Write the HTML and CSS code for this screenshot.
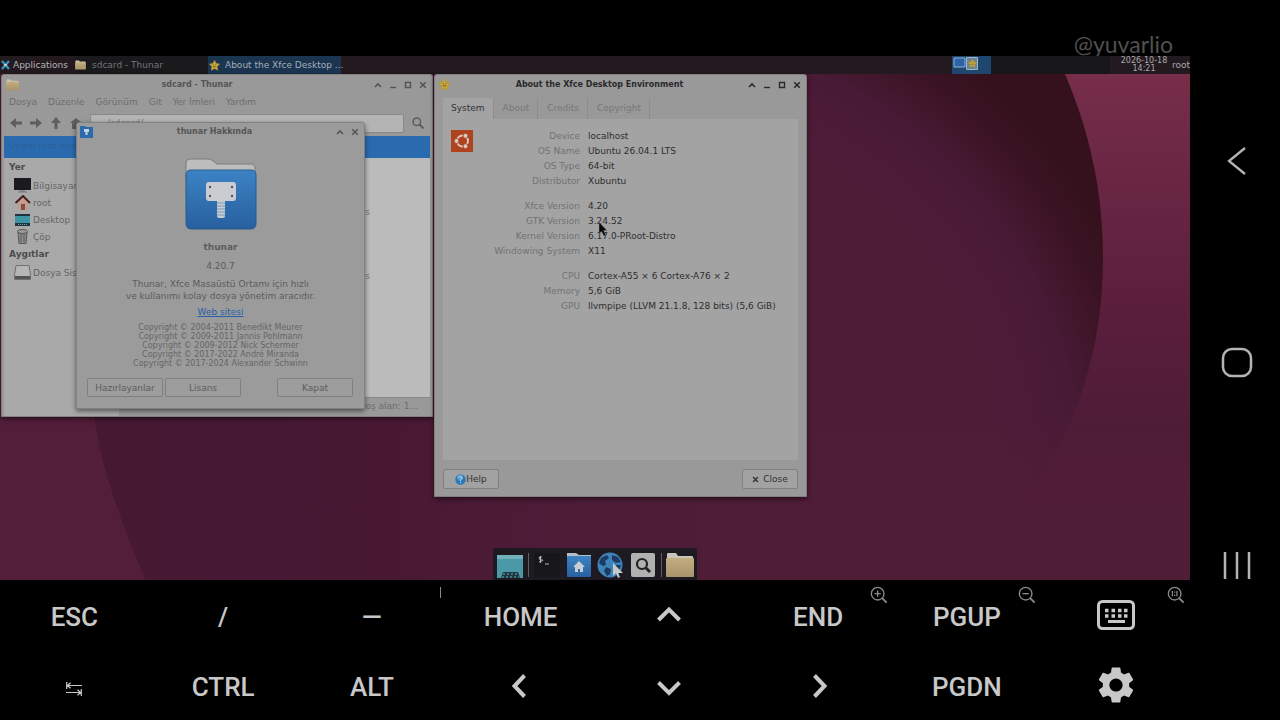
FILE: index.html
```html
<!DOCTYPE html>
<html lang="tr">
<head>
<meta charset="utf-8">
<title>Xfce Desktop</title>
<link rel="stylesheet" href="styles.css">
</head>
<body>
<svg class="defs" width="0" height="0" aria-hidden="true">
  <defs>
    <linearGradient id="blueFolder" x1="0" y1="0" x2="0" y2="1"><stop offset="0" stop-color="#3c83c4"/><stop offset="1" stop-color="#27609f"/></linearGradient>
    <linearGradient id="tan" x1="0" y1="0" x2="0" y2="1"><stop offset="0" stop-color="#c3ad80"/><stop offset="1" stop-color="#a8946c"/></linearGradient>
    <symbol id="up" viewBox="0 0 8 8"><path d="M1 6l3-3 3 3" fill="none" stroke="currentColor" stroke-width="1.6"/></symbol>
    <symbol id="min" viewBox="0 0 8 8"><path d="M1 6.5h6" fill="none" stroke="currentColor" stroke-width="1.4"/></symbol>
    <symbol id="max" viewBox="0 0 8 8"><path d="M1.5 1.5h5v5h-5z" fill="none" stroke="currentColor" stroke-width="1.4"/></symbol>
    <symbol id="x" viewBox="0 0 8 8"><path d="M1.2 1.2l5.6 5.6M6.8 1.2L1.2 6.8" fill="none" stroke="currentColor" stroke-width="1.6"/></symbol>
    <symbol id="folder" viewBox="0 0 28 26"><path d="M1 6V2q0-1 1-1h8l2 3h14q1 0 1 1v3H1z" fill="#c9c4b8"/><path d="M0 7q0-1 1-1h26q1 0 1 1v17q0 1-1 1H1q-1 0-1-1z" fill="url(#tan)"/></symbol>
    <symbol id="star" viewBox="0 0 12 12"><path d="M6 .5l1.700 3.400 3.800.6-2.800 2.700.7 3.900L6 9.300l-3.400 1.800.7-3.900L.5 4.500l3.800-.6z" fill="#c8a73a" stroke="#b5983a" stroke-width=".8" stroke-linejoin="round"/><path d="M4.500 5.200h.8M6.800 5.200h.8M4.400 6.800q1.600 1.300 3.200 0" stroke="#5d4a14" stroke-width=".7" fill="none"/></symbol>
    <symbol id="lens" viewBox="0 0 20 20"><circle cx="8.500" cy="8.500" r="7" fill="none" stroke="currentColor" stroke-width="1.500"/><path d="M13.500 13.500l5 5" stroke="currentColor" stroke-width="2"/></symbol>
  </defs>
</svg>
<div class="phone">
  <header class="top"><span class="mark">@yuvarlio</span></header>

  <main class="desktop">
    <svg class="wall" viewBox="0 0 1190 524" preserveAspectRatio="none" aria-hidden="true">
      <defs>
        <linearGradient id="outside" x1="0" y1="0" x2="0" y2="1"><stop offset="0" stop-color="#792f4a"/><stop offset=".22" stop-color="#6a2744"/><stop offset=".5" stop-color="#591e3c"/><stop offset=".7" stop-color="#4f1c37"/><stop offset="1" stop-color="#521d36"/></linearGradient>
        <linearGradient id="west" x1="0" y1="0" x2="1" y2="0"><stop offset=".4" stop-color="#521e3a"/><stop offset="1" stop-color="#521e3a" stop-opacity="0"/></linearGradient>
        <radialGradient id="disc" gradientUnits="userSpaceOnUse" cx="640" cy="420" r="530"><stop offset="0" stop-color="#4f1c37"/><stop offset=".68" stop-color="#4f1c38"/><stop offset=".83" stop-color="#481a35"/><stop offset=".93" stop-color="#3a1322"/><stop offset="1" stop-color="#34111c"/></radialGradient>
        <linearGradient id="leftShade" x1="0" y1="0" x2="1" y2="0"><stop offset="0" stop-color="#461832"/><stop offset=".5" stop-color="#491934"/><stop offset="1" stop-color="#4f1c37" stop-opacity="0"/></linearGradient>
        <linearGradient id="tail" x1="0" y1="0" x2="0" y2="1"><stop offset=".5" stop-color="#501d37" stop-opacity="0"/><stop offset=".82" stop-color="#501d37"/></linearGradient>
      </defs>
      <rect width="1190" height="524" fill="url(#outside)"/>
      <rect width="1000" height="524" fill="url(#west)"/>
      <path d="M1057 0C1085 60 1103 125 1103 200C1103 290 1080 370 1022 450Q990 500 960 524H146C110 440 92 380 88 300V0z" fill="url(#disc)"/>
      <path d="M88 300C92 380 110 440 146 524H720V300z" fill="url(#leftShade)"/>
      <path d="M700 200h490v324H700z" fill="url(#tail)"/>
    </svg>

    <nav class="panel">
      <button class="apps"><svg width="9" height="10" viewBox="0 0 9 10"><path d="M1 1l7 8M8 1L1 9" stroke="#3a93bd" stroke-width="2.400"/><path d="M3.200 5h2.600" stroke="#c9d4d8" stroke-width="2"/></svg>Applications</button>
      <button class="task"><svg width="11" height="10"><use href="#folder"/></svg>sdcard - Thunar</button>
      <button class="task active"><svg width="11" height="11"><use href="#star"/></svg>About the Xfce Desktop ...</button>
      <span class="spacer"></span>
      <span class="pager"><svg width="28" height="16" viewBox="0 0 28 16"><path d="M2 2h11v9H2z" fill="#2d62a8" stroke="#8fb4d6"/><path d="M14.500 1.500h11v12h-11z" fill="#6d8290" stroke="#9bb7c8"/><use href="#star" x="16" y="3" width="9" height="9"/></svg></span>
      <span class="tray"></span>
      <span class="clock"><span>2026-10-18</span><span>14:21</span></span>
      <span class="user">root</span>
    </nav>

    <section class="window thunar">
      <div class="titlebar">
        <svg width="15" height="12"><use href="#folder"/></svg><h2>sdcard - Thunar</h2>
        <button aria-label="Topla"><svg><use href="#up"/></svg></button><button aria-label="Küçült"><svg><use href="#min"/></svg></button><button aria-label="Büyüt"><svg><use href="#max"/></svg></button><button aria-label="Kapat"><svg><use href="#x"/></svg></button>
      </div>
      <div class="menubar"><button>Dosya</button><button>Düzenle</button><button>Görünüm</button><button>Git</button><button>Yer İmleri</button><button>Yardım</button></div>
      <div class="toolbar">
        <button aria-label="Geri"><svg viewBox="0 0 12 12"><path d="M6 1v3.500h6v3H6V11L0 6z" fill="currentColor"/></svg></button>
        <button aria-label="İleri"><svg viewBox="0 0 12 12"><path d="M6 1v3.500H0v3h6V11l6-5z" fill="currentColor"/></svg></button>
        <button aria-label="Yukarı"><svg viewBox="0 0 12 12"><path d="M1 6h3.500v6h3V6H11L6 0z" fill="currentColor"/></svg></button>
        <button aria-label="Ev"><svg viewBox="0 0 12 12"><path d="M6 1l6 5h-2v6H2V6H0z" fill="currentColor"/></svg></button>
        <input type="text" value="/sdcard/" aria-label="Konum">
        <button aria-label="Ara"><svg viewBox="0 0 12 12"><circle cx="4.800" cy="4.800" r="3.800" fill="none" stroke="currentColor" stroke-width="1.500"/><path d="M7.500 7.500l4 4" stroke="currentColor" stroke-width="2"/></svg></button>
      </div>
      <div class="infobar">Uyarı: root hesabı</div>
      <div class="panes">
        <aside class="places">
          <h3>Yer</h3>
          <a href="#"><svg viewBox="0 0 17 15"><path d="M0 0h17v12H0z" fill="#1b1a1e"/><path d="M6 12h5v2H6z" fill="#888"/><path d="M4 14h9" stroke="#777"/></svg>Bilgisayar</a>
          <a href="#"><svg viewBox="0 0 17 15"><path d="M4 7l5-5 5 5v8H4z" fill="#c69a8c"/><path d="M7 9h4v6H7z" fill="#7c4f42"/><path d="M1.500 8L9 1l7 7" fill="none" stroke="#43201c" stroke-width="2"/></svg>root</a>
          <a href="#"><svg viewBox="0 0 17 15"><path d="M1 2h15v12H1z" fill="#3c94a4"/><path d="M1 2h15v2H1zM1 11h15v3H1z" fill="#22313a"/><path d="M4 12.500h9" stroke="#6ab" stroke-dasharray="1 1"/></svg>Desktop</a>
          <a href="#"><svg viewBox="0 0 17 15"><path d="M4 3h9l-1 11.500H5z" fill="#8e8e8e" stroke="#555"/><path d="M7 5v8M10 5v8" stroke="#555"/><ellipse cx="8.500" cy="2.500" rx="5" ry="2" fill="#9c9c9c" stroke="#555"/></svg>Çöp</a>
          <h3>Aygıtlar</h3>
          <a href="#"><svg viewBox="0 0 17 15"><path d="M2 .5h13l1.500 9.500v4.500H.5V10z" fill="#b6b6b6" stroke="#707070"/><path d="M1 11h15v3H1z" fill="#555"/></svg>Dosya Sistemi</a>
        </aside>
        <div class="content">
          <ul class="files"><li>Downloads</li><li>Pictures</li></ul>
          <div class="status"><span>boş alan: 1...</span></div>
        </div>
      </div>
    </section>

    <section class="window about">
      <div class="titlebar">
        <svg width="13" height="13"><use href="#star"/></svg><h2>About the Xfce Desktop Environment</h2>
        <button aria-label="Shade"><svg><use href="#up"/></svg></button><button aria-label="Minimize"><svg><use href="#min"/></svg></button><button aria-label="Maximize"><svg><use href="#max"/></svg></button><button aria-label="Close window"><svg><use href="#x"/></svg></button>
      </div>
      <div class="tabs" role="tablist"><button role="tab" aria-selected="true">System</button><button role="tab">About</button><button role="tab">Credits</button><button role="tab">Copyright</button></div>
      <div class="page">
        <svg class="ubuntu" width="22" height="22" viewBox="0 0 22 22"><path d="M0 0h22v22H0z" fill="#b0431f"/><circle cx="11.500" cy="11" r="5.500" fill="none" stroke="#d8cbc5" stroke-width="1.900"/><g fill="#d8cbc5" stroke="#b0431f"><circle cx="5.500" cy="11" r="2.500"/><circle cx="14.500" cy="5.800" r="2.500"/><circle cx="14.500" cy="16.200" r="2.500"/></g></svg>
        <table>
          <tbody><tr><th scope="row">Device</th><td>localhost</td></tr><tr><th scope="row">OS Name</th><td>Ubuntu 26.04.1 LTS</td></tr><tr><th scope="row">OS Type</th><td>64-bit</td></tr><tr><th scope="row">Distributor</th><td>Xubuntu</td></tr></tbody>
          <tbody><tr><th scope="row">Xfce Version</th><td>4.20</td></tr><tr><th scope="row">GTK Version</th><td>3.24.52</td></tr><tr><th scope="row">Kernel Version</th><td>6.17.0-PRoot-Distro</td></tr><tr><th scope="row">Windowing System</th><td>X11</td></tr></tbody>
          <tbody><tr><th scope="row">CPU</th><td>Cortex-A55 × 6 Cortex-A76 × 2</td></tr><tr><th scope="row">Memory</th><td>5,6 GiB</td></tr><tr><th scope="row">GPU</th><td>llvmpipe (LLVM 21.1.8, 128 bits) (5,6 GiB)</td></tr></tbody>
        </table>
      </div>
      <div class="actions">
        <button><svg width="11" height="11" viewBox="0 0 11 11"><circle cx="5.500" cy="5.500" r="5.200" fill="#2c79b8"/><circle cx="5" cy="3.500" r="3" fill="#5a9ccb"/><path d="M4 4q0-1.500 1.500-1.500T7 4q0 1-1.500 2v1M5.500 8v1" fill="none" stroke="#c3d6e4"/></svg>Help</button>
        <button class="close"><svg width="7" height="7"><use href="#x"/></svg>Close</button>
      </div>
    </section>

    <section class="window dialog">
      <div class="titlebar">
        <svg width="13" height="12" viewBox="0 0 13 12"><path d="M0 0h5l1 1h7v11H0z" fill="#2b6aac"/><path d="M4 3h5v3H7.500v3h-2V6H4z" fill="#c5d2df"/></svg><h2>thunar Hakkında</h2>
        <button aria-label="Topla"><svg><use href="#up"/></svg></button><button aria-label="Kapat"><svg><use href="#x"/></svg></button>
      </div>
      <svg class="logo" width="72" height="72" viewBox="0 0 72 72"><path d="M1 22V6q0-5 5-5h17q3 0 5 2l4 3h34q4 0 4 5v11z" fill="#bdbdbd" stroke="#7d7d7d"/><path d="M1 17q0-5 5-5h60q5 0 5 5v48q0 6-5 6H6q-5 0-5-6z" fill="url(#blueFolder)" stroke="#2b5a8a"/><rect x="21" y="24" width="30" height="19" rx="3" fill="#c9cdd2"/><path d="M32 43h8v15q0 2-2 2h-4q-2 0-2-2z" fill="#c9cdd2"/><path d="M32 45h8M32 48h8M32 51h8M32 54h8M32 57h8" stroke="#7b98b8"/><g fill="#555"><circle cx="25" cy="29" r="1.200"/><circle cx="47" cy="29" r="1.200"/><circle cx="25" cy="38" r="1.200"/><circle cx="47" cy="38" r="1.200"/></g></svg>
      <h3>thunar</h3>
      <p class="version">4.20.7</p>
      <p class="desc">Thunar, Xfce Masaüstü Ortamı için hızlı<br>ve kullanımı kolay dosya yönetim aracıdır.</p>
      <a href="#">Web sitesi</a>
      <p class="legal">Copyright © 2004-2011 Benedikt Meurer<br>Copyright © 2009-2011 Jannis Pohlmann<br>Copyright © 2009-2012 Nick Schermer<br>Copyright © 2017-2022 André Miranda<br>Copyright © 2017-2024 Alexander Schwinn</p>
      <div class="actions"><button>Hazırlayanlar</button><button>Lisans</button><button class="last">Kapat</button></div>
    </section>

    <nav class="dock">
      <button aria-label="Desktop"><svg viewBox="0 0 28 26"><path d="M1 3h26v23H1z" fill="#4b98a7"/><path d="M1 3h26v4H1z" fill="#6fb0ba"/><path d="M5 26l2-6h15l2 6z" fill="#1d3640"/><path d="M7 22h15M6 25h17" stroke="#6fb0ba" stroke-dasharray="2 2"/></svg></button>
      <i></i>
      <button aria-label="Terminal"><svg viewBox="0 0 28 26"><rect x="1" y="1" width="26" height="24" rx="1" fill="#17171a"/><path d="M9 5q-3-1-3 1t3 2-3 2M7.500 4v7M12 12h4" stroke="#b5b5b5" fill="none"/></svg></button>
      <button aria-label="Home"><svg viewBox="0 0 28 26"><path d="M2 5V1h9l3 2h12v3z" fill="#b5bdc5"/><rect x="2" y="4" width="24" height="21" rx="1" fill="url(#blueFolder)"/><path d="M14 9l6 6h-2v5h-3v-3h-2v3h-3v-5H8z" fill="#c9cdd2"/></svg></button>
      <button aria-label="Web"><svg viewBox="0 0 28 26"><circle cx="13" cy="13" r="12.500" fill="#3f83bb"/><path d="M4 6l6-3 2 3-4 3 1 4-3 1-4-3zM15 3l6 2 3 5-5 1-4-3zM9 15l5 2-1 5-3 2-3-5zM19 13l5 0-2 6-3-1z" fill="#1b3c60"/><path d="M16 11l10 10h-5l2 4-2 1-2-5-3 3z" fill="#c8c8c8"/></svg></button>
      <button aria-label="Search"><svg viewBox="0 0 28 26"><rect x="2" y="1" width="24" height="24" rx="2" fill="#b1b1b1"/><circle cx="13" cy="12" r="5" fill="none" stroke="#222" stroke-width="2.200"/><path d="M17 16l4 4" stroke="#222" stroke-width="3"/></svg></button>
      <i></i>
      <button aria-label="Files"><svg viewBox="0 0 28 26"><use href="#folder"/></svg></button>
    </nav>
    <svg class="pointer" width="10" height="15" viewBox="0 0 10 15"><path d="M1 0v12l2.500-2.500L6 14l2-1-2.300-4.500H9z" fill="#080808" stroke="#8a8a8a" stroke-width=".5"/></svg>
  </main>

  <section class="keys">
    <button>ESC</button>
    <button>/</button>
    <div class="cell"><button>—</button><span class="tick"></span></div>
    <button>HOME</button>
    <button aria-label="Up"><svg width="26" height="26" viewBox="0 0 26 26"><path d="M2.500 16L13 5.500 23.500 16" fill="none" stroke="currentColor" stroke-width="4"/></svg></button>
    <div class="cell"><button>END</button><button class="zoom" aria-label="Zoom in"><svg viewBox="0 0 20 20"><use href="#lens"/><path d="M8.500 5v7M5 8.500h7" stroke="currentColor" stroke-width="1.500"/></svg></button></div>
    <div class="cell"><button>PGUP</button><button class="zoom" aria-label="Zoom out"><svg viewBox="0 0 20 20"><use href="#lens"/><path d="M5 8.500h7" stroke="currentColor" stroke-width="1.500"/></svg></button></div>
    <div class="cell"><button class="pic" aria-label="Keyboard"><svg width="38" height="30" viewBox="0 0 38 30"><rect x="1.500" y="1.500" width="35" height="27" rx="4" fill="none" stroke="currentColor" stroke-width="3"/><path d="M8 10.500h3.500M14.500 10.500h3.500M21 10.500h3.500M27 10.500h3.500M8 16h3.500M14.500 16h3.500M21 16h3.500M27 16h3.500" stroke="currentColor" stroke-width="3.500"/><path d="M11 21.500h17" stroke="currentColor" stroke-width="3"/></svg></button><button class="zoom" aria-label="Zoom reset"><svg viewBox="0 0 20 20"><use href="#lens"/><path d="M6 5.500v6M11 5.500v6M8.500 6v1.500M8.500 9.500V11" stroke="currentColor" stroke-width="1.400"/></svg></button></div>
    <button aria-label="Tab"><svg width="16" height="18" viewBox="0 0 16 18"><path d="M.7 4v7M1 7.500h15M4.500 4.700L1.500 7.500l3 2.800M15.300 11v7M15 14.500H0M11.500 11.700l3 2.800-3 2.800" fill="none" stroke="currentColor" stroke-width="1.200"/></svg></button>
    <button>CTRL</button>
    <button>ALT</button>
    <button aria-label="Left"><svg width="26" height="26" viewBox="0 0 26 26"><path d="M16.500 1.500L6.500 12l10 10.500" fill="none" stroke="currentColor" stroke-width="4"/></svg></button>
    <button aria-label="Down"><svg width="26" height="26" viewBox="0 0 26 26"><path d="M2.500 8.500L13 19 23.500 8.500" fill="none" stroke="currentColor" stroke-width="4"/></svg></button>
    <button aria-label="Right"><svg width="26" height="26" viewBox="0 0 26 26"><path d="M9.500 1.500L19.500 12l-10 10.500" fill="none" stroke="currentColor" stroke-width="4"/></svg></button>
    <button>PGDN</button>
    <button class="pic" aria-label="Settings"><svg width="44" height="44" viewBox="0 0 24 24"><path fill="currentColor" d="M19.140 12.940c.04-.3.06-.61.06-.94 0-.32-.02-.64-.07-.94l2.030-1.580c.18-.14.23-.41.12-.61l-1.920-3.320c-.12-.22-.37-.29-.59-.22l-2.390.96c-.5-.38-1.030-.7-1.620-.94l-.36-2.540c-.04-.24-.24-.41-.48-.41h-3.840c-.24 0-.43.17-.47.41l-.36 2.540c-.59.24-1.130.57-1.620.94l-2.390-.96c-.22-.08-.47 0-.59.22L2.740 8.870c-.12.21-.08.47.12.61l2.030 1.580c-.05.3-.09.63-.09.94s.02.64.07.94l-2.030 1.580c-.18.14-.23.41-.12.61l1.920 3.320c.12.22.37.29.59.22l2.390-.96c.5.38 1.030.7 1.620.94l.36 2.540c.05.24.24.41.48.41h3.840c.24 0 .44-.17.47-.41l.36-2.540c.59-.24 1.130-.56 1.620-.94l2.390.96c.22.08.47 0 .59-.22l1.920-3.320c.12-.22.07-.47-.12-.61l-2.010-1.580zM12 15.600c-1.980 0-3.600-1.620-3.600-3.600s1.620-3.600 3.600-3.600 3.600 1.620 3.600 3.600-1.620 3.600-3.600 3.600z"/></svg></button>
  </section>

  <nav class="sysnav">
    <button aria-label="Back"><svg width="32" height="32" viewBox="0 0 32 32"><path d="M24 3L8 16l16 13" fill="none" stroke="currentColor" stroke-width="2.300"/></svg></button>
    <button aria-label="Home screen"><svg width="32" height="32" viewBox="0 0 32 32"><rect x="2" y="2" width="28" height="27" rx="9" fill="none" stroke="currentColor" stroke-width="2.500"/></svg></button>
    <button aria-label="Recents"><svg width="32" height="32" viewBox="0 0 32 32"><path d="M4 3v27M16 3v27M28 3v27" stroke="currentColor" stroke-width="2.500"/></svg></button>
  </nav>
</div>
</body>
</html>
```
FILE: styles.css
```css
* { box-sizing: border-box; }
body { margin: 0; background: #000; font: 9px/12px "DejaVu Sans", sans-serif; }
button { margin: 0; padding: 0; border: 0; background: none; color: inherit; font: inherit; display: inline-flex; align-items: center; justify-content: center; }
h2, h3, p, ul { margin: 0; padding: 0; font-size: inherit; list-style: none; }
a { color: inherit; text-decoration: none; }
svg { flex: none; }
.defs { position: absolute; }

.phone { min-height: 100vh; display: grid; grid-template-columns: 1fr 90px; grid-template-rows: 56px 1fr 140px; background: #000; }
.top { grid-column: 1; display: flex; justify-content: flex-end; align-items: flex-end; padding-right: 17px; }
.mark { font: 23px/24px Lato, sans-serif; color: #505050; }

.desktop { grid-column: 1; position: relative; overflow: hidden; }
.wall { position: absolute; width: 100%; height: 100%; }

.panel { position: relative; display: flex; height: 18px; background: #231a1f; color: #a8a8a8; white-space: nowrap; }
.apps { width: 75px; padding-left: 1px; gap: 3px; justify-content: flex-start; color: #b4b4b4; }
.task { width: 133px; gap: 6px; justify-content: flex-start; background: #1a191b; color: #757575; }
.task.active { gap: 5px; padding-left: 1px; background: #1b3450; color: #a5afb8; }
.spacer { flex: 1; }
.pager { width: 39px; background: #1e466f; }
.tray { width: 119px; background: #171618; }
.clock { width: 60px; padding: 1px 0 0 8px; display: flex; flex-direction: column; align-items: center; font-size: 8px; line-height: 8px; }
.user { width: 20px; line-height: 18px; text-align: right; }

.window { position: absolute; display: flex; flex-direction: column; background: #999; border: 1px solid #808080; border-radius: 3px 3px 0 0; box-shadow: 0 2px 5px rgba(0, 0, 0, .5); color: #555; }
.titlebar { display: flex; align-items: center; height: 19px; padding: 0 5px 0 3px; gap: 7px; }
.titlebar h2 { flex: 1; text-align: center; font-size: 8px; }
.titlebar button svg { width: 8px; height: 8px; }

.thunar { left: 1px; top: 18px; width: 432px; }
.menubar { display: flex; gap: 11px; height: 16px; padding-left: 7px; color: #6e6e6e; }
.toolbar { display: flex; align-items: center; gap: 8px; height: 26px; padding: 0 8px; color: #5e5e5e; }
.toolbar button { width: 12px; height: 12px; }
.toolbar svg { width: 12px; height: 12px; }
.toolbar input { flex: 1; min-width: 0; height: 19px; padding: 0 16px; border: 1px solid #888; border-radius: 2px; background: #b4b4b4; color: #777; font: inherit; }
.infobar { height: 22px; margin: 0 2px; padding-left: 5px; line-height: 20px; background: #2a6bb0; color: #2a5f96; }
.panes { display: flex; height: 258px; margin: 0 2px; }
.places { width: 115px; background: #a9a9a9; padding-left: 5px; white-space: nowrap; overflow: hidden; }
.places h3 { height: 19px; line-height: 19px; color: #4c4c4c; }
.places a { display: flex; align-items: center; height: 17px; padding-left: 5px; gap: 2px; color: #666; }
.places svg { width: 17px; height: 15px; }
.content { flex: 1; display: flex; flex-direction: column; }
.files { flex: 1; padding-top: 22px; background: #bbb; color: #777; }
.files li { width: 251px; height: 64px; line-height: 64px; text-align: right; }
.status { height: 19px; padding-right: 12px; border-top: 1px solid #888; text-align: right; line-height: 16px; color: #6c6c6c; }

.about { left: 434px; top: 18px; width: 373px; color: #333; }
.about .titlebar { color: #2a2a2a; }
.tabs { display: flex; gap: 1px; height: 25px; padding: 4px 8px 0; color: #777; }
.tabs button { padding: 0 8px 2px; border-right: 1px solid #8d8d8d; }
.tabs [aria-selected] { background: #a3a3a3; color: #333; }
.page { display: flex; align-items: flex-start; min-height: 341px; margin: 0 8px; padding: 10px 8px; background: #a3a3a3; }
.ubuntu { margin-top: 1px; }
table { border-collapse: collapse; line-height: 15px; }
th { width: 111px; padding: 0 4px 0 0; font-weight: 400; text-align: right; color: #727272; white-space: nowrap; }
td { padding: 0 0 0 4px; white-space: nowrap; color: #2e2e2e; }
tbody + tbody tr:first-child > * { padding-top: 10px; }
.actions { display: flex; gap: 2px; }
.actions button { height: 20px; border: 1px solid #808080; border-radius: 2px; background: #a2a2a2; }
.about .actions { padding: 9px 8px 7px; justify-content: space-between; }
.about .actions button { width: 56px; }
.about .close { gap: 4px; }

.dialog { left: 76px; top: 66px; width: 289px; align-items: center; color: #5c5c5c; background: #9b9b9b; }
.dialog .titlebar { align-self: stretch; height: 17px; color: #555; }
.dialog .logo { margin-top: 18px; }
.dialog h3 { margin-top: 11px; }
.version { margin-top: 7px; }
.desc { margin-top: 6px; text-align: center; line-height: 12px; }
.dialog a { margin-top: 4px; color: #2860a8; text-decoration: underline; }
.legal { margin-top: 5px; text-align: center; font-size: 8px; line-height: 9px; color: #666; }
.dialog .actions { align-self: stretch; margin: 10px 11px 11px 10px; }
.dialog .actions button { width: 76px; height: 19px; background: #9d9d9d; }
.dialog .actions .last { margin-left: auto; }

.dock { position: absolute; left: 50%; bottom: 0; margin-left: -102px; display: flex; align-items: center; gap: 4px; height: 32px; padding: 2px 3px 0; background: #1e1a21; border-radius: 3px 3px 0 0; }
.dock svg { width: 28px; height: 26px; }
.dock i { width: 1px; height: 24px; background: #625d62; }
.pointer { position: absolute; left: 598px; top: 166px; }

.keys { grid-column: 1; display: grid; grid-template-columns: repeat(8, 1fr); grid-template-rows: 70px 70px; color: #c8c8c8; font: 500 26px/30px Roboto, sans-serif; }
.keys > button, .cell > button:first-child { width: 100%; height: 100%; padding-top: 3px; }
.keys .pic:first-child, .keys > .pic { padding-top: 0; }
.cell { position: relative; }
.zoom { position: absolute; top: 6px; right: 5px; color: #8a8a8a; }
.zoom svg { width: 18px; height: 18px; }
.tick { position: absolute; top: 7px; right: 5px; width: 1px; height: 11px; background: #888; }

.sysnav { grid-column: 2; grid-row: 1 / 4; display: grid; grid-template-rows: repeat(3, 1fr); padding: 60px 0 54px 3px; color: #b4b4b4; }
```
